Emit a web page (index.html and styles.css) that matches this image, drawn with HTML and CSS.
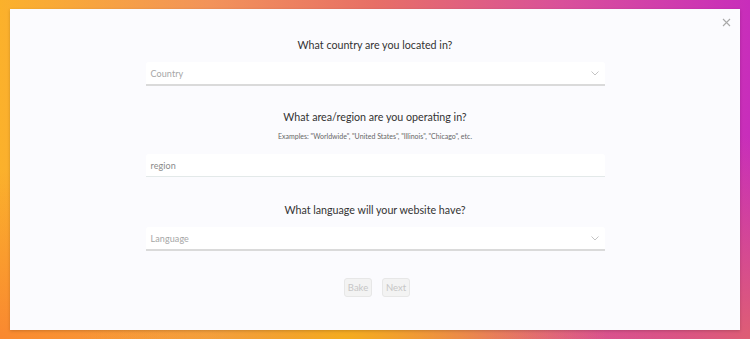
FILE: index.html
```html
<!DOCTYPE html>
<html lang="en">
<head>
<meta charset="utf-8">
<link rel="stylesheet" href="styles.css">
</head>
<body>
<div class="card">
  <button class="close" aria-label="Close">
    <svg width="9" height="9" viewBox="0 0 9 9"><path d="M1 1L8 8M8 1L1 8" stroke="#a9a9a9" stroke-width="1.1" fill="none"/></svg>
  </button>
  <div class="form">
    <h2 class="q q-first">What country are you located in?</h2>
    <div class="field select">
      <span class="ph">Country</span>
      <svg class="chev" width="8" height="5" viewBox="0 0 8 5"><path d="M0.5 0.5L4 4L7.5 0.5" stroke="#c4c4c4" stroke-width="1" fill="none"/></svg>
    </div>
    <h2 class="q q-second">What area/region are you operating in?</h2>
    <p class="hint">Examples: "Worldwide", "United States", "Illinois", "Chicago", etc.</p>
    <div class="field input">
      <span class="ph ph-dark">region</span>
    </div>
    <h2 class="q q-third">What language will your website have?</h2>
    <div class="field select">
      <span class="ph">Language</span>
      <svg class="chev" width="8" height="5" viewBox="0 0 8 5"><path d="M0.5 0.5L4 4L7.5 0.5" stroke="#c4c4c4" stroke-width="1" fill="none"/></svg>
    </div>
    <div class="actions">
      <button class="btn">Bake</button>
      <button class="btn">Next</button>
    </div>
  </div>
</div>
</body>
</html>
```
FILE: styles.css
```css
* { box-sizing: border-box; }
html, body { margin: 0; height: 100%; }
body {
  padding: 9px 10px 9px 10px;
  font-family: "Lato", "Open Sans", sans-serif;
  background:
    radial-gradient(ellipse 35% 45% at 46% 100%, rgba(244,172,30,1) 0%, rgba(244,172,30,0) 100%),
    radial-gradient(ellipse 30% 50% at 0% 100%, rgba(249,136,48,1) 0%, rgba(249,136,48,0) 100%),
    radial-gradient(ellipse 35% 60% at 100% 100%, rgba(222,94,116,1) 0%, rgba(222,94,116,0) 100%),
    linear-gradient(90deg, #fbb12b 0%, #f2935a 28%, #e76f66 50%, #d9509a 75%, #c82dbb 100%);
}
.card {
  position: relative;
  height: 321px;
  background: #fbfbfe;
  box-shadow: 0 1px 3px rgba(0,0,0,0.18);
  display: flex;
  justify-content: center;
}
.close {
  position: absolute;
  top: 9px;
  right: 9px;
  border: 0;
  background: none;
  padding: 0;
  width: 9px;
  height: 9px;
  display: flex;
}
.form {
  width: 459px;
  padding-top: 26px;
  display: flex;
  flex-direction: column;
}
.q {
  margin: 0;
  font-size: 10.7px;
  line-height: 20px;
  font-weight: 400;
  color: #333;
  text-align: center;
}
.q-second { margin-top: 21px; }
.q-third { margin-top: 23px; }
.hint {
  margin: 3px 0 0;
  font-size: 7px;
  line-height: 12px;
  color: #666;
  text-align: center;
}
.field {
  display: flex;
  align-items: center;
  justify-content: space-between;
  background: #fff;
  padding: 0 6px 0 5px;
  border-radius: 3px 3px 0 0;
}
.select {
  height: 24px;
  margin-top: 7px;
  border-bottom: 2px solid #dadada;
}
.input {
  height: 23px;
  margin-top: 12px;
  border-bottom: 1px solid #e3e9e9;
}
.ph {
  font-size: 9px;
  color: #a6a6a6;
  letter-spacing: 0.1px;
}
.ph-dark { color: #8a8a8a; }
.chev { margin-top: 1px; }
.actions {
  display: flex;
  justify-content: center;
  gap: 10px;
  margin-top: 27px;
  padding-left: 4px;
}
.btn {
  width: 28px;
  height: 19px;
  padding: 0;
  border: 1px solid #e7e7e7;
  border-radius: 3px;
  background: #f3f3f3;
  color: #c6c6c6;
  font-family: inherit;
  font-size: 9.5px;
}
```
